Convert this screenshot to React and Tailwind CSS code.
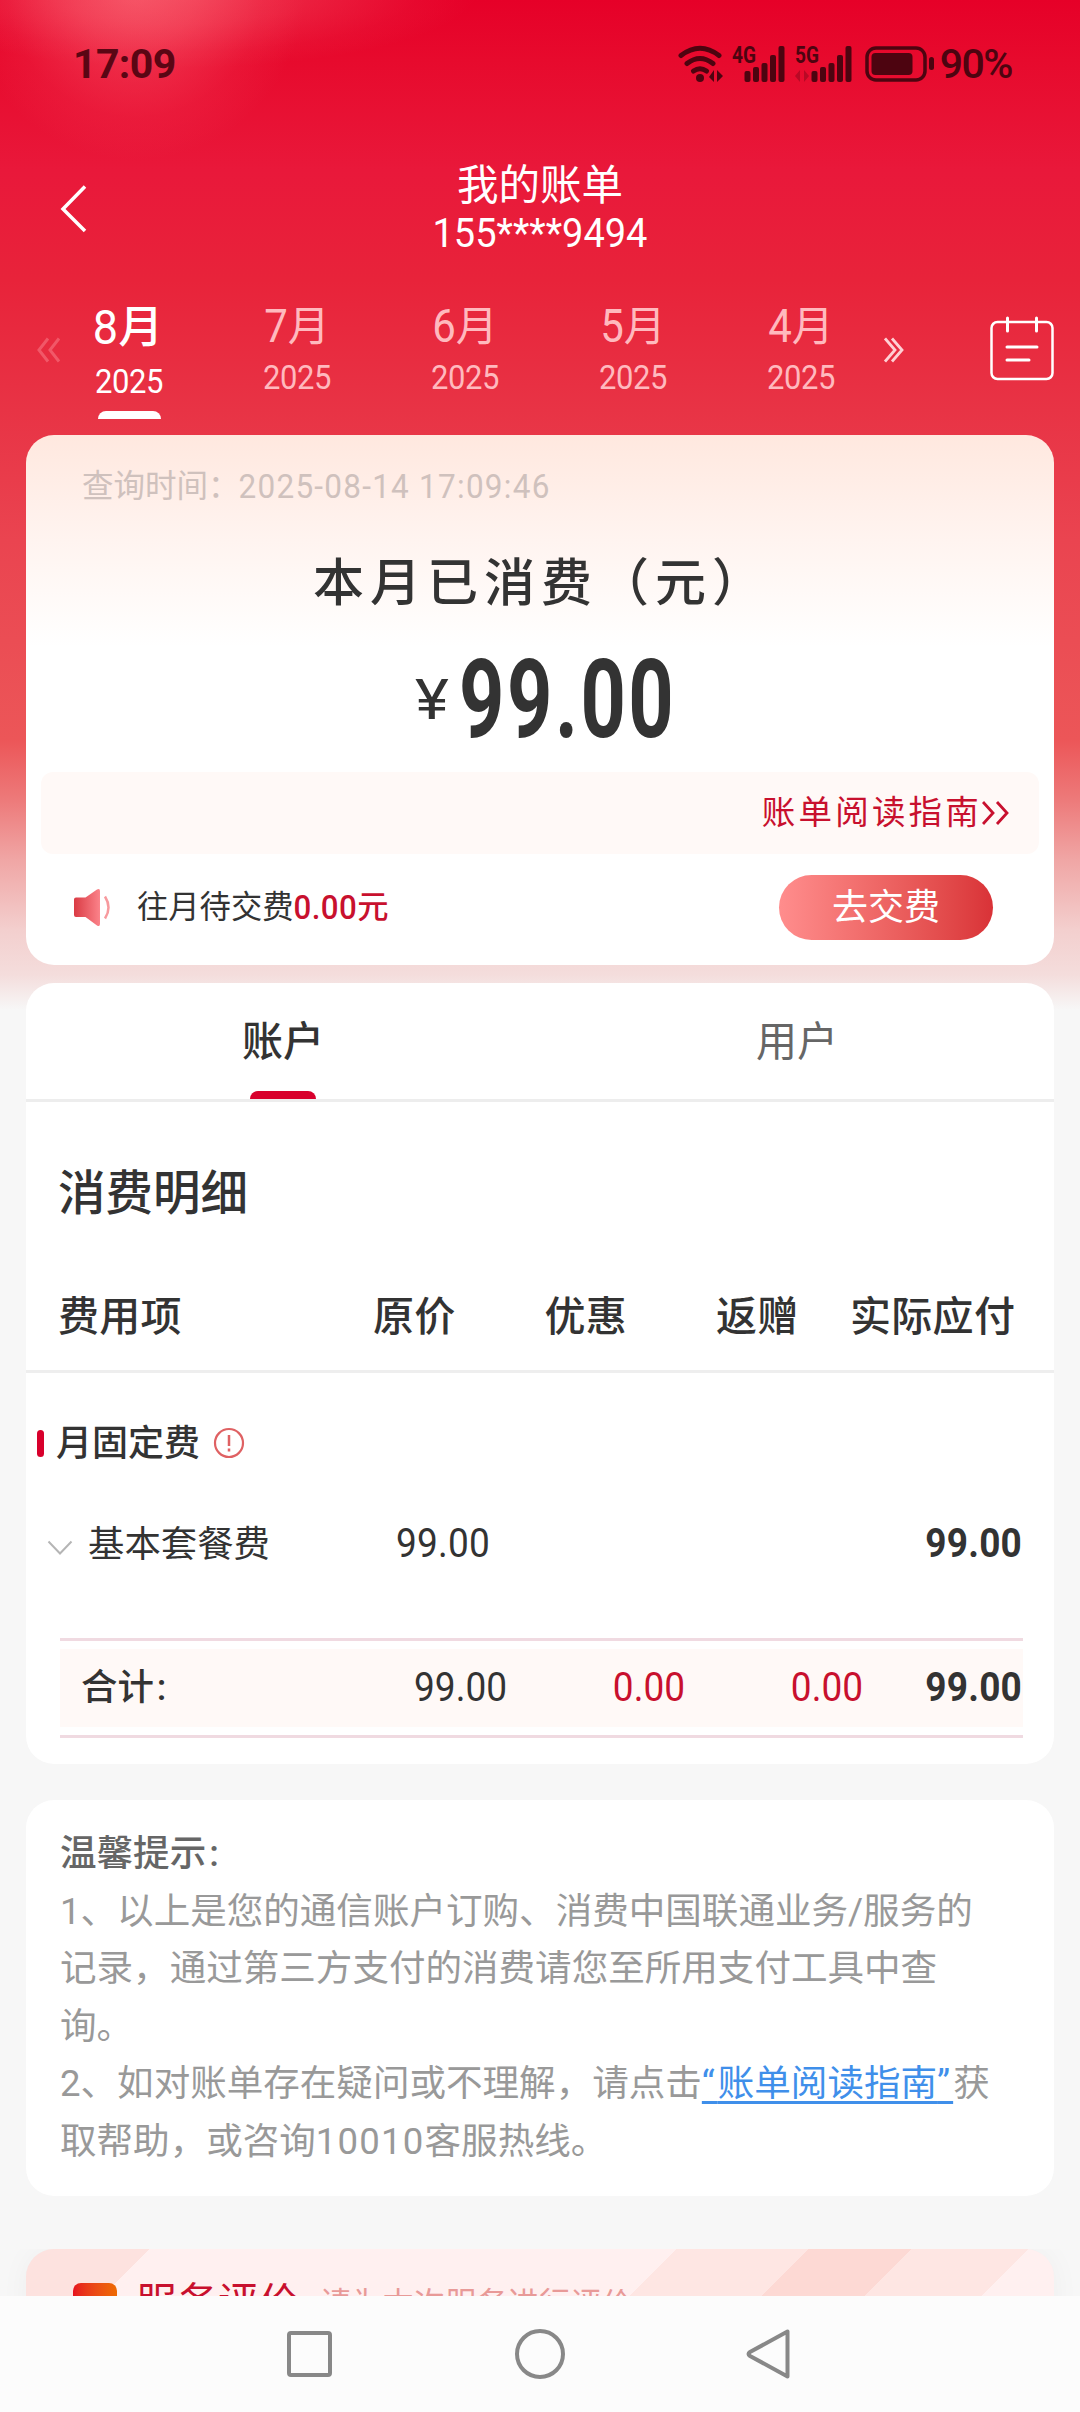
const months = [
  { m: "8", active: true },
  { m: "7" },
  { m: "6" },
  { m: "5" },
  { m: "4" },
];

function Num({ children, className = "" }) {
  return <span className={"inline-block scale-y-[1.08] " + className}>{children}</span>;
}

function Signal({ label, arrows }) {
  return (
    <svg className="h-[38px] w-[56px] overflow-visible" viewBox="0 0 56 38" fill="#4d0410">
      <text x="0" y="18" fontSize="23.500" fontWeight="700" fontFamily="Roboto" textLength="24" lengthAdjust="spacingAndGlyphs">{label}</text>
      {arrows && <path d="M5 25v12L0 31zM9 25v12l5-6z" opacity="0.3" />}
      <g transform={arrows ? "translate(4)" : ""}>
        <rect x="12.500" y="26" width="6" height="11" rx="2" />
        <rect x="21" y="22" width="6" height="15" rx="2" />
        <rect x="29.500" y="18" width="6" height="19" rx="2" />
        <rect x="38" y="10" width="6" height="27" rx="2" />
        <rect x="46.500" y="1" width="6" height="36" rx="2" />
      </g>
    </svg>
  );
}

function StatusBar() {
  return (
    <div className="flex h-[128px] items-center pl-[73px] pr-[68px] text-[#5a0614]">
      <span className="text-[41px] font-bold leading-none tracking-[-0.6px]">17:09</span>
      <div className="ml-auto flex items-center">
        <svg className="h-[38px] w-[46px]" viewBox="0 0 46 38" fill="none" stroke="#4d0410" strokeWidth="5" strokeLinecap="round">
          <path d="M3 10.500Q22 -4 41 10.500M9 18.500Q22 8.500 35 18.500M15.500 26Q22 21.500 28.500 26" />
          <circle cx="22" cy="33" r="4" fill="#4d0410" stroke="none" />
          <path d="M36 25v12l-5-5zM39 25v12l6-6z" fill="#4d0410" stroke="none" />
        </svg>
        <div className="ml-[8px] flex"><Signal label="4G" /></div>
        <div className="ml-[7px] flex"><Signal label="5G" arrows /></div>
        <svg className="ml-[14px] h-[38px] w-[70px]" viewBox="0 0 70 38">
          <rect x="2" y="3" width="58" height="32" rx="9" fill="none" stroke="#4d0410" strokeWidth="3.500" />
          <rect x="6.500" y="8" width="41" height="22" rx="4" fill="#4d0410" />
          <rect x="64" y="12" width="5" height="13" rx="2.500" fill="#4d0410" />
        </svg>
        <span className="ml-[5px] text-[41px] font-medium leading-none tracking-[-1.5px] text-[#4d0410]">90%</span>
      </div>
    </div>
  );
}

function Header() {
  return (
    <div className="grid h-[152px] grid-cols-[100px_1fr_100px] text-white">
      <svg className="ml-[58px] mt-[56px] h-[50px] w-[32px]" viewBox="0 0 32 50" fill="none" stroke="#fff" strokeWidth="3.500">
        <path d="M27 2.500L5 25l22 22" />
      </svg>
      <div className="flex flex-col items-center pt-[34px]">
        <div className="text-[41.500px] leading-[48px]">我的账单</div>
        <div className="text-[38px] leading-[47px]">
          <Num>155****9494</Num>
        </div>
      </div>
    </div>
  );
}

function Months() {
  return (
    <div className="flex h-[155px] text-[#ffb9be]">
      <svg className="ml-[37px] mt-[57px] h-[26px] w-[24px] opacity-40" viewBox="0 0 24 26" fill="none" stroke="#ff9aa4" strokeWidth="3">
        <path d="M11 1.500L2 13l9 11.500M22 1.500L13 13l9 11.500" />
      </svg>
      <div className="ml-[-16px] flex">
        {months.map(({ m, active }) =>
          active ? (
            <div key={m} className="flex w-[168px] flex-col items-center pt-[21px] text-white">
              <div className="pr-[2px] text-[45px] font-medium leading-[54px]"><Num className="font-normal">{m}</Num>月</div>
              <div className="mt-[8px] text-[31px] leading-[38px] tracking-[-0.4px]"><Num>2025</Num></div>
              <div className="mt-[10px] h-[8px] w-[63px] rounded-t-lg bg-white" />
            </div>
          ) : (
            <div key={m} className="flex w-[168px] flex-col items-center pt-[20px]">
              <div className="text-[42px] leading-[54px]"><Num>{m}</Num>月</div>
              <div className="mt-[5px] text-[31px] leading-[38px] tracking-[-0.4px]"><Num>2025</Num></div>
            </div>
          )
        )}
      </div>
      <svg className="ml-[-1px] mt-[57px] h-[26px] w-[24px]" viewBox="0 0 24 26" fill="none" stroke="#ffd0d4" strokeWidth="2.800">
        <path d="M1 1.500L11 13 1 24.500M8 1.500L18 13 8 24.500" />
      </svg>
      <svg className="ml-[82px] mt-[35px] h-[68px] w-[64px]" viewBox="0 0 64 68" fill="none" stroke="#fff" strokeWidth="2.500" strokeLinecap="round">
        <rect x="1.500" y="7" width="61" height="57" rx="6" />
        <path d="M17.500 3v13M46.500 3v13M17 32h30M17 45h22" strokeWidth="3" />
      </svg>
    </div>
  );
}

function Summary() {
  return (
    <section className="mx-[26px] flex h-[530px] flex-col rounded-[28px] bg-linear-to-b from-[#ffe8df] via-[#fff4f0] via-20% to-white to-40%">
      <div className="mt-[29px] pl-[56px] text-[31.500px] leading-[46px] text-[#cfc1bd]">
        查询时间：<Num className="ml-[-1px] tracking-[1.250px]">2025-08-14 17:09:46</Num>
      </div>
      <div className="mt-[41px] whitespace-nowrap pl-[2px] text-center text-[51px] font-medium leading-[66px] tracking-[6px] text-[#333]">
        本月已消费（元）
      </div>
      <div className="mt-[28px] flex h-[110px] items-center pl-[389px] text-[#333]">
        <span className="origin-left scale-x-[1.15] text-[56px] leading-none">¥</span>
        <span className="ml-[15px] origin-left scale-x-[0.72] text-[110px] font-bold leading-[110px] tracking-[3.5px]">99.00</span>
      </div>
      <div className="mx-[15px] mt-[17px] flex h-[82px] items-center justify-end rounded-xl bg-[#fff9f7] pr-[28px] text-[#c8102e]">
        <span className="text-[33.500px] leading-none tracking-[3.200px]">账单阅读指南</span>
        <svg className="h-[26px] w-[29px]" viewBox="0 0 29 26" fill="none" stroke="#c8102e" strokeWidth="2.800">
          <path d="M1 2l10 11L1 24M15 2l10 11-10 11" />
        </svg>
      </div>
      <div className="flex h-[106px] items-center pl-[46px] pr-[61px]">
        <svg className="h-[40px] w-[40px]" viewBox="0 0 40 40">
          <defs>
            <linearGradient id="horn" x1="0" y1="0" x2="1" y2="0">
              <stop offset="0" stopColor="#da3b44" />
              <stop offset="1" stopColor="#fb838a" />
            </linearGradient>
          </defs>
          <path d="M4 10.500h9.500L25 2.500q3-1.500 3 1.500v33q0 3-3 1.500L13.500 30H4q-2 0-2-2V12.500q0-2 2-2z" fill="url(#horn)" />
          <path d="M33 9.500q7 11 0 22" fill="none" stroke="#f79a9e" strokeWidth="2.500" />
        </svg>
        <div className="ml-[25px] pt-px text-[31.300px] leading-none text-[#333]">
          往月待交费<span className="font-medium text-[#c8102e]"><Num className="tracking-[0.4px]">0.00</Num>元</span>
        </div>
        <button className="ml-auto h-[65px] w-[214px] rounded-full bg-linear-to-r from-[#ff8d8d] to-[#d93237] pt-[2px] text-[36px] leading-none text-white">去交费</button>
      </div>
    </section>
  );
}

function Detail() {
  return (
    <section className="mx-[26px] mt-[18px] h-[781px] rounded-[28px] bg-white text-[#333]">
      <div className="grid h-[119px] grid-cols-2 border-b-[3px] border-[#ededed] text-[41px] leading-[119px]">
        <div className="flex flex-col items-center font-medium">
          <span className="h-[108px]">账户</span>
          <span className="h-[8px] w-[66px] rounded-t-lg bg-[#d8002c]" />
        </div>
        <div className="text-center text-[#666]">用户</div>
      </div>
      <h2 className="pl-[32px] pt-[61px] text-[47.500px] font-medium leading-[62px]">消费明细</h2>
      <div className="mt-[67px] flex h-[81px] border-b-[3px] border-[#eee] pl-[32px] text-[41px] font-medium leading-[51px] tracking-[0.3px]">
        <span className="w-[315px]">费用项</span>
        <span className="w-[171.500px]">原价</span>
        <span className="w-[171.500px]">优惠</span>
        <span className="w-[134px]">返赠</span>
        <span>实际应付</span>
      </div>
      <div className="mt-[45px] flex h-[50px] items-center pl-[11px] text-[36px] font-medium">
        <span className="h-[27px] w-[7px] rounded-full bg-[#d8002c]" />
        <span className="ml-[12px] pt-px leading-none">月固定费</span>
        <svg className="ml-[13px] h-[32px] w-[32px]" viewBox="0 0 32 32" fill="none" stroke="#df6163" strokeWidth="2.200">
          <circle cx="16" cy="16" r="14" />
          <path d="M16 8v11M16 21.500v3" strokeWidth="2.500" />
        </svg>
      </div>
      <div className="mt-[51px] flex h-[50px] items-center pl-[21px] pr-[32px] text-[36.400px] leading-[50px]">
        <svg className="mt-2 h-[16px] w-[26px]" viewBox="0 0 26 16" fill="none" stroke="#b5b5b5" strokeWidth="2">
          <path d="M1.500 1.500L13 13.500 24.500 1.500" />
        </svg>
        <span className="ml-[15px] w-[308px] pt-px">基本套餐费</span>
        <Num className="text-[37px] tracking-[0.2px]">99.00</Num>
        <Num className="ml-auto text-[37px] font-bold tracking-[0.2px]">99.00</Num>
      </div>
      <div className="ml-[34px] mr-[31px] mt-[69px] border-y-[3px] border-[#f0dae1] py-2">
        <div className="grid h-[78px] grid-cols-[447px_178px_178px_1fr] items-center bg-[#fff9f7] text-right text-[36.400px] leading-[50px]">
          <div className="flex justify-between pl-[21px]">
            <span className="font-medium">合计<span className="ml-[3px]">:</span></span>
            <Num className="text-[37px]">99.00</Num>
          </div>
          <Num className="text-[37px] text-[#c8102e]">0.00</Num>
          <Num className="text-[37px] text-[#c8102e]">0.00</Num>
          <Num className="pr-px text-[37px] font-bold tracking-[0.2px]">99.00</Num>
        </div>
      </div>
    </section>
  );
}

function Tips() {
  return (
    <section className="mx-[26px] mt-[36px] h-[396px] whitespace-nowrap rounded-[28px] bg-white pl-[34px] pt-[25px] text-[36.550px] leading-[57.600px] text-[#999]">
      <p className="font-medium text-[#666]">温馨提示<span className="ml-[3px]">:</span></p>
      <p>
        1、以上是您的通信账户订购、消费中国联通业务/服务的
        <br />
        记录，通过第三方支付的消费请您至所用支付工具中查
        <br />
        询。
      </p>
      <p>
        2、如对账单存在疑问或不理解，请点击
        <a className="text-[#3f8fea] underline decoration-[3px] underline-offset-[5px]"><span className="tracking-[3px]">“</span>账单阅读指南<span className="tracking-[3px]">”</span></a>获
        <br />
        取帮助，或咨询<span className="tracking-[1.200px]">10010</span>客服热线。
      </p>
    </section>
  );
}

function Rating() {
  return (
    <section className="mt-[53px] h-[47px] overflow-hidden px-[26px]">
      <div className="h-[120px] rounded-t-[28px] bg-[linear-gradient(135deg,#fde2df_0_87px,transparent_87px_460px,#fee6e3_460px_553px,#fdd9d4_553px_626px,#fee6e3_626px_709px,transparent_709px)] bg-[#fff0f0] shadow-[0_0_30px_rgba(0,0,0,0.04)]">
        <div className="flex pl-[47px] pt-[29px]">
          <span className="mt-[5px] h-[44px] w-[44px] rounded-lg bg-linear-to-r from-[#e60f1e] to-[#ee6a00]" />
          <span className="ml-[19px] mt-px text-[41px] leading-[48px] text-[#c8102e]">服务评价</span>
          <span className="ml-[20px] mt-[3px] text-[31.300px] leading-[48px] text-[#e89a98]">请为本次服务进行评价</span>
        </div>
      </div>
    </section>
  );
}

function NavBar() {
  return (
    <nav className="flex h-[116px] justify-center bg-[#fcfcfc] pt-[32px]">
      <svg className="h-[52px] w-[520px]" viewBox="0 0 520 52" fill="none" stroke="#888" strokeWidth="4">
        <rect x="9" y="5" width="41" height="42" rx="2" />
        <circle cx="260" cy="26" r="23" />
        <path d="M507.500 3.500v45L470 28q-3-2 0-4z" strokeLinejoin="round" />
      </svg>
    </nav>
  );
}

export default function App() {
  return (
    <div className="h-[2412px] w-[1080px] overflow-hidden bg-[#f7f7f7] font-['Roboto','Noto_Sans_CJK_SC',sans-serif]">
      <div className="bg-[radial-gradient(ellipse_300px_80px_at_180px_-12px,rgba(255,140,140,0.35),rgba(255,140,140,0.22)_45%,rgba(255,140,140,0.06)_80%,transparent),radial-gradient(ellipse_170px_170px_at_135px_-10px,rgba(255,125,135,0.5),rgba(255,115,128,0.36)_35%,rgba(255,105,120,0.1)_75%,transparent),linear-gradient(180deg,#e60028_0,#e70a2d_60px,#e9183a_170px,#e8233a_280px,#e83345_410px,#ea4450_540px,#ec5658_740px,#ed7a7a_800px,#f0a6a5_860px,#f3cfce_930px,#f4dddc_975px,#f7f7f7_1010px)]">
        <StatusBar />
        <Header />
        <Months />
        <Summary />
        <Detail />
        <Tips />
        <Rating />
      </div>
      <NavBar />
    </div>
  );
}
